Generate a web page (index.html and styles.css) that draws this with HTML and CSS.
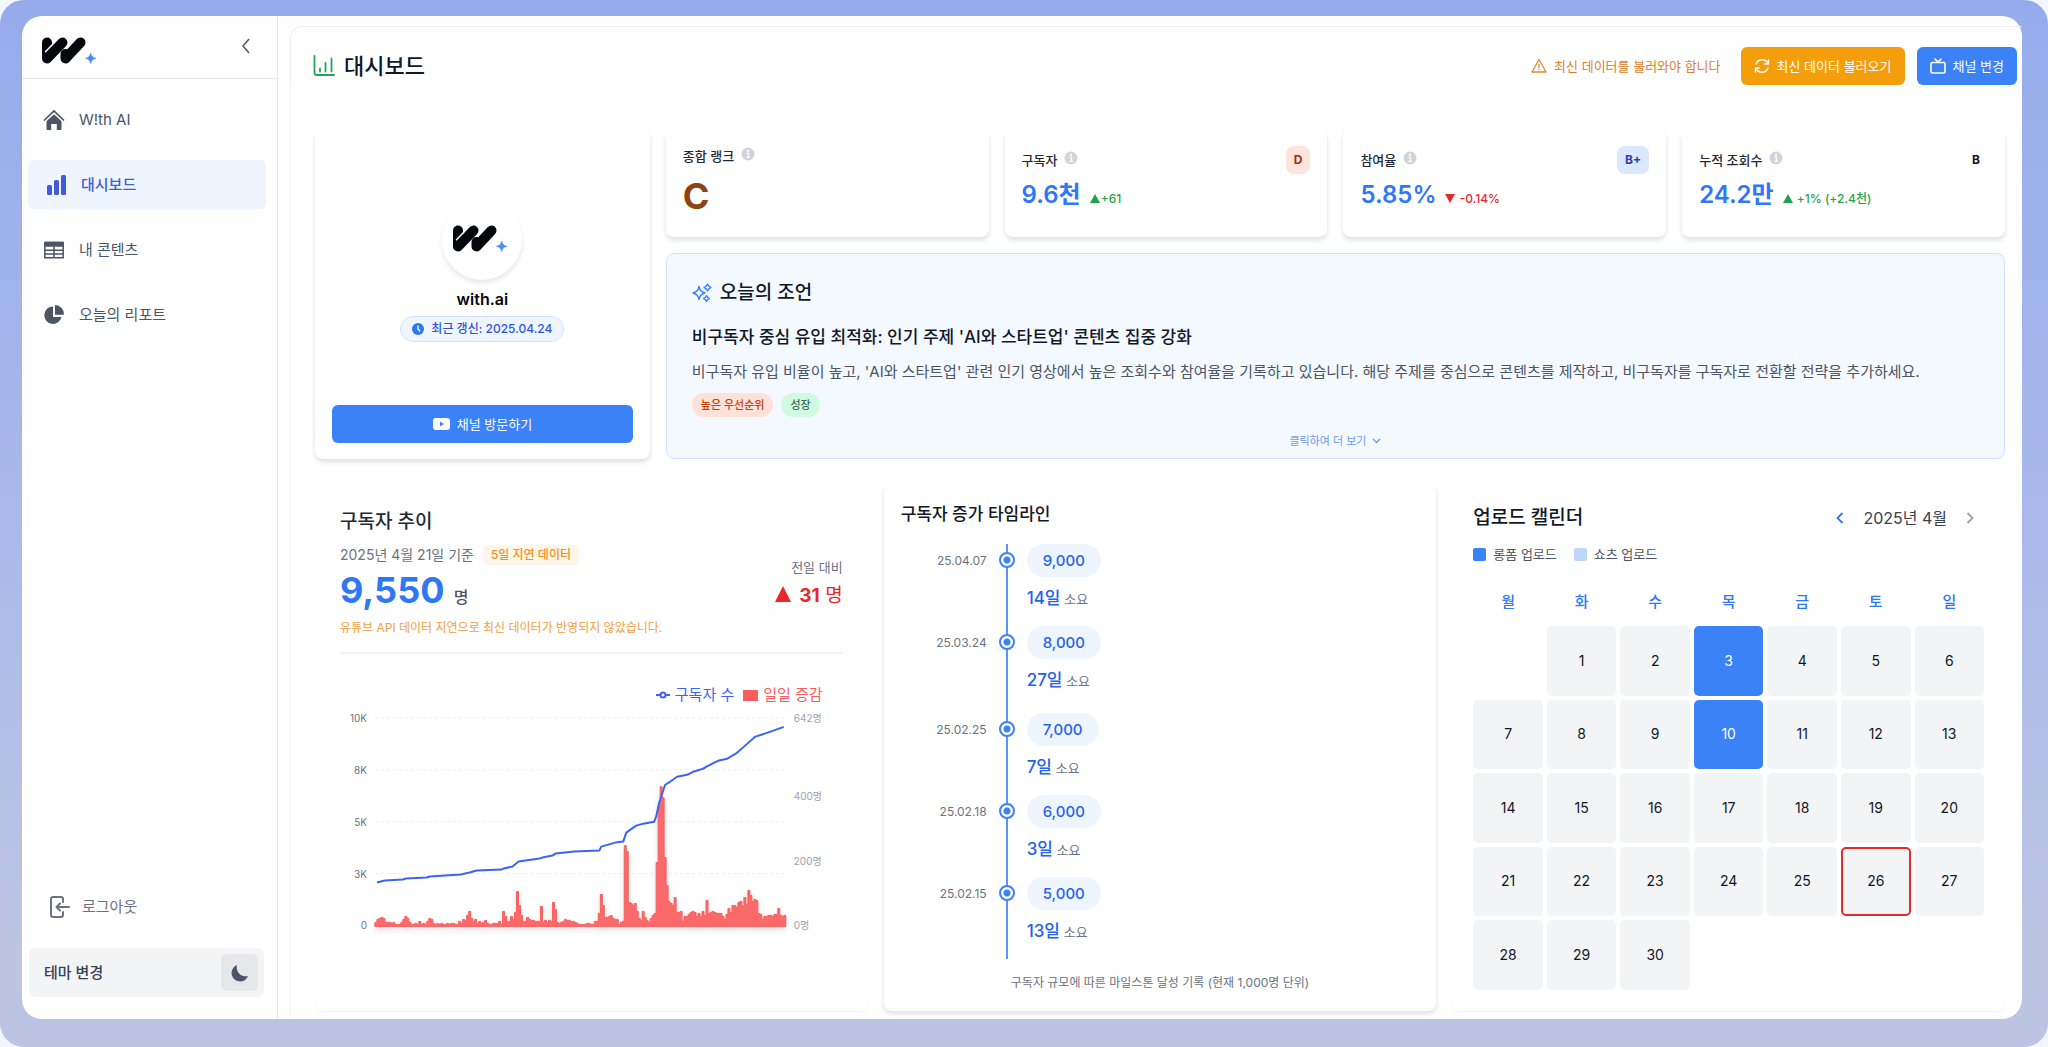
FILE: index.html
```html
<!DOCTYPE html>
<html lang="ko">
<head>
<meta charset="utf-8">
<meta name="viewport" content="width=device-width, initial-scale=1">
<title>W!th AI 대시보드</title>
<link rel="stylesheet" href="styles.css">
</head>
<body>
<svg class="defs" width="0" height="0" aria-hidden="true">
  <symbol id="logo" viewBox="0 0 54 27">
    <g fill="none" stroke="#05060c" stroke-width="10" stroke-linecap="round" stroke-linejoin="round">
      <path d="M5 5.500V21.500L20.500 5.500"/>
      <path d="M23.500 17V21.500L38.500 5.500"/>
    </g>
    <path d="M3.500 14.800L10.500 7.600" fill="none" stroke="#fff" stroke-width="1.500" stroke-linecap="round"/>
    <path d="M48.700 16c.8 3.400 1.900 4.500 5.300 5.300-3.400.8-4.500 1.900-5.300 5.300-.8-3.400-1.900-4.500-5.300-5.300 3.400-.8 4.500-1.900 5.300-5.300z" fill="#4f88fb" stroke="#4f88fb" stroke-width=".6"/>
  </symbol>
  <symbol id="info" viewBox="0 0 14 14">
    <circle cx="7" cy="7" r="6.500" fill="#d1d5db"/>
    <circle cx="7" cy="3.900" r="1.100" fill="#fff"/>
    <path d="M5.500 6.300h2v4M5.300 10.300h3.600" fill="none" stroke="#fff" stroke-width="1.300"/>
  </symbol>
</svg>

<div class="window">
  <aside class="sidebar">
    <div class="sidebar-head">
      <svg class="logo" role="img" aria-label="W!th AI"><use href="#logo"/></svg>
      <button class="icon-button" type="button" aria-label="메뉴 접기">
        <svg width="10" height="16" viewBox="0 0 10 16" fill="none" stroke="#4b5563" stroke-width="1.500"><path d="M8 1L2 8l6 7"/></svg>
      </button>
    </div>
    <nav class="nav">
      <a class="nav-item" href="#home">
        <svg width="22" height="22" viewBox="0 0 22 22" fill="none" stroke="#4b5563" stroke-width="1.700"><path d="M1 11.500L11 2l10 9.500"/><path d="M3.500 12.300L11 5.200l7.500 7.100V20a1 1 0 0 1-1 1h-3.700v-6H8.200v6H4.500a1 1 0 0 1-1-1z" fill="#4b5563" stroke="none"/></svg>
        <span>W!th AI</span>
      </a>
      <a class="nav-item nav-item--active" href="#dashboard" aria-current="page">
        <svg width="22" height="22" viewBox="0 0 22 22" fill="#3f5bdb"><rect x="2" y="11" width="5" height="10" rx="1.500"/><rect x="9" y="6" width="5" height="15" rx="1.500"/><rect x="16" y="1" width="5" height="20" rx="1.500"/></svg>
        <span>대시보드</span>
      </a>
      <a class="nav-item" href="#contents">
        <svg width="22" height="22" viewBox="0 0 22 22"><path d="M1.800 3.500h18.400v15.200H1.800zM1.800 11.200h18.400M1.800 15h18.400M11 7.500v11.200" fill="none" stroke="#4b5563" stroke-width="1.500"/><rect x="1" y="2.800" width="20" height="5" rx="1.500" fill="#4b5563"/></svg>
        <span>내 콘텐츠</span>
      </a>
      <a class="nav-item" href="#report">
        <svg width="22" height="22" viewBox="0 0 22 22" fill="#4b5563"><path d="M10 2.500V13h8.500A8.700 8.700 0 1 1 10 2.500z"/><path d="M12 1a9 9 0 0 1 9 9.800h-9z"/></svg>
        <span>오늘의 리포트</span>
      </a>
    </nav>
    <div class="sidebar-foot">
      <button class="logout" type="button">
        <svg width="20" height="22" viewBox="0 0 20 22" fill="none" stroke="#6b7280" stroke-width="2" stroke-linecap="round" stroke-linejoin="round"><path d="M13 6V3a2 2 0 0 0-2-2H3a2 2 0 0 0-2 2v16a2 2 0 0 0 2 2h8a2 2 0 0 0 2-2v-3"/><path d="M19 11H7M10 7.500L6.500 11l3.500 3.500"/></svg>
        <span>로그아웃</span>
      </button>
      <div class="theme">
        <span>테마 변경</span>
        <button class="theme-toggle" type="button" aria-label="다크 모드">
          <svg width="18" height="18" viewBox="0 0 18 18" fill="#4b5563"><path d="M6 1a8.500 8.500 0 1 0 11 11A9 9 0 0 1 6 1z"/></svg>
        </button>
      </div>
    </div>
  </aside>

  <main class="main">
    <header class="page-head">
      <svg width="22" height="22" viewBox="0 0 22 22" fill="none" stroke="#22a652" stroke-width="1.800" stroke-linecap="round"><path d="M1.500 1v17a2 2 0 0 0 2 2H21M7 16.500v-3M12.500 16.500V8M18.500 16.500v-13"/></svg>
      <h1>대시보드</h1>
      <p class="warning">
        <svg width="16" height="16" viewBox="0 0 16 16" fill="none" stroke="#e08a2e" stroke-width="1.300" stroke-linejoin="round"><path d="M8 1.500l7 12.500H1zM8 6v4M8 11v1.300"/></svg>
        최신 데이터를 불러와야 합니다
      </p>
      <button class="button button--amber" type="button">
        <svg width="16" height="16" viewBox="0 0 16 16" fill="none" stroke="#fff" stroke-width="1.400" stroke-linecap="round" stroke-linejoin="round"><path d="M14.500 2v4h-4M1.500 14v-4h4M14.200 6A6.500 6.500 0 0 0 2 6M1.800 10A6.500 6.500 0 0 0 14 10"/></svg>
        최신 데이터 불러오기
      </button>
      <button class="button" type="button">
        <svg width="16" height="16" viewBox="0 0 16 16" fill="none" stroke="#fff" stroke-width="1.600" stroke-linecap="round" stroke-linejoin="round"><rect x="1" y="4.500" width="14" height="10.500" rx="1.500"/><path d="M5 1l3 3 3-3"/></svg>
        채널 변경
      </button>
    </header>

    <div class="overview">
      <section class="card profile">
        <div class="avatar"><svg class="logo" role="img" aria-label="with.ai"><use href="#logo"/></svg></div>
        <h2 class="profile-name">with.ai</h2>
        <p class="updated">
          <svg width="12" height="12" viewBox="0 0 12 12"><circle cx="6" cy="6" r="6" fill="#2f76f0"/><path d="M6 2.500V6l2 2.500" fill="none" stroke="#fff" stroke-width="1.300"/></svg>
          최근 갱신: 2025.04.24
        </p>
        <a class="button profile-link" href="#channel">
          <svg width="17" height="12" viewBox="0 0 17 12"><rect width="17" height="12" rx="3" fill="#fff"/><path d="M7 3.500L11 6 7 8.500z" fill="#3b82f6"/></svg>
          채널 방문하기
        </a>
      </section>

      <div class="overview-side">
        <div class="stats">
          <section class="card stat stat--rank">
            <h2 class="stat-label">종합 랭크 <svg width="14" height="14"><use href="#info"/></svg></h2>
            <strong class="rank">C</strong>
          </section>
          <section class="card stat">
            <div class="stat-row"><h2 class="stat-label">구독자 <svg width="14" height="14"><use href="#info"/></svg></h2><span class="grade grade--d">D</span></div>
            <p class="stat-value"><strong>9.6천</strong><span class="delta delta--up"><i class="tri tri--up"></i>+61</span></p>
          </section>
          <section class="card stat">
            <div class="stat-row"><h2 class="stat-label">참여율 <svg width="14" height="14"><use href="#info"/></svg></h2><span class="grade grade--b">B+</span></div>
            <p class="stat-value"><strong>5.85%</strong><span class="delta delta--down"><i class="tri tri--down"></i> -0.14%</span></p>
          </section>
          <section class="card stat">
            <div class="stat-row"><h2 class="stat-label">누적 조회수 <svg width="14" height="14"><use href="#info"/></svg></h2><span class="grade">B</span></div>
            <p class="stat-value"><strong>24.2만</strong><span class="delta delta--up"><i class="tri tri--up"></i> +1% (+2.4천)</span></p>
          </section>
        </div>

        <section class="advice">
          <h2 class="advice-title">
            <svg width="20" height="20" viewBox="0 0 20 20" fill="none" stroke="#3b82f6" stroke-width="1.400" stroke-linejoin="round"><path d="M7 3.500c.9 4 2 5.300 6 6.500-4 1.200-5.100 2.500-6 6.500-.9-4-2-5.300-6-6.500 4-1.200 5.100-2.500 6-6.500z"/><path d="M15.500 1l1.300 2.200L19 4.500l-2.200 1.300L15.500 8l-1.300-2.200L12 4.500l2.200-1.300z"/><path d="M14.500 12.500l1.100 1.900 1.900 1.100-1.900 1.100-1.100 1.900-1.100-1.900-1.900-1.100 1.900-1.100z"/></svg>
            오늘의 조언
          </h2>
          <h3>비구독자 중심 유입 최적화: 인기 주제 'AI와 스타트업' 콘텐츠 집중 강화</h3>
          <p class="advice-text">비구독자 유입 비율이 높고, 'AI와 스타트업' 관련 인기 영상에서 높은 조회수와 참여율을 기록하고 있습니다. 해당 주제를 중심으로 콘텐츠를 제작하고, 비구독자를 구독자로 전환할 전략을 추가하세요.</p>
          <div class="tags"><span class="tag tag--priority">높은 우선순위</span><span class="tag tag--growth">성장</span></div>
          <button class="more" type="button">클릭하여 더 보기
            <svg width="9" height="6" viewBox="0 0 9 6" fill="none" stroke="#6c9bf5" stroke-width="1.300"><path d="M1 1l3.500 3.500L8 1"/></svg>
          </button>
        </section>
      </div>
    </div>

    <div class="details">
      <section class="card card--flat trend">
        <h2>구독자 추이</h2>
        <div class="trend-summary">
          <div>
            <p class="trend-date">2025년 4월 21일 기준 <span class="delay">5일 지연 데이터</span></p>
            <p class="trend-total"><strong>9,550</strong> 명</p>
            <p class="trend-note">유튜브 API 데이터 지연으로 최신 데이터가 반영되지 않았습니다.</p>
          </div>
          <div class="trend-change">
            <p>전일 대비</p>
            <p class="trend-diff"><i class="tri tri--big"></i><strong>31</strong> 명</p>
          </div>
        </div>
        <div class="legend">
          <span class="legend-line"><svg width="14" height="8" viewBox="0 0 14 8" fill="none" stroke="#3b64f6" stroke-width="2"><path d="M0 4h4M10 4h4"/><circle cx="7" cy="4" r="2.500"/></svg>구독자 수</span>
          <span class="legend-bar"><svg width="15" height="11"><rect width="15" height="11" fill="#f95d5d"/></svg>일일 증감</span>
        </div>
        <svg class="chart" viewBox="0 0 504 236" role="img" aria-label="구독자 수와 일일 증감">
          <path class="grid" d="M35 18H447M35 70H447M35 122H447M35 174H447M35 226H447"/>
          <g class="axis axis--left"><text x="27" y="22">10K</text><text x="27" y="74">8K</text><text x="27" y="126">5K</text><text x="27" y="178">3K</text><text x="27" y="230">0</text></g>
          <g class="axis"><text x="455" y="22">642명</text><text x="455" y="100">400명</text><text x="455" y="165">200명</text><text x="455" y="230">0명</text></g>
          <path id="bars" class="bars"/>
          <polyline class="line" points="37,183 45,181 63,180 66,179 87,178 90,177 121,175 130,173 137,171 162,170 164,169 173,167 179,162 200,159 203,158 213,156 216,154 235,152 260,151 262,147 276,143 284,142 287,133 297,126 304,124 315,122 317,117 320,103 324,91 326,85 331,82 338,77 348,75 354,72 364,69 367,67 379,61 388,59 398,53 407,45 416,37 431,32 445,27"/>
        </svg>
      </section>

      <section class="card timeline">
        <h2>구독자 증가 타임라인</h2>
        <ol class="milestones">
          <li><time>25.04.07</time><i class="dot"></i><div><span class="pill">9,000</span><p><b>14일</b> 소요</p></div></li>
          <li class="long"><time>25.03.24</time><i class="dot"></i><div><span class="pill">8,000</span><p><b>27일</b> 소요</p></div></li>
          <li><time>25.02.25</time><i class="dot"></i><div><span class="pill">7,000</span><p><b>7일</b> 소요</p></div></li>
          <li><time>25.02.18</time><i class="dot"></i><div><span class="pill">6,000</span><p><b>3일</b> 소요</p></div></li>
          <li><time>25.02.15</time><i class="dot"></i><div><span class="pill">5,000</span><p><b>13일</b> 소요</p></div></li>
        </ol>
        <p class="timeline-note">구독자 규모에 따른 마일스톤 달성 기록 (현재 1,000명 단위)</p>
      </section>

      <section class="card card--flat calendar">
        <div class="calendar-head">
          <h2>업로드 캘린더</h2>
          <button class="icon-button" type="button" aria-label="이전 달"><svg width="8" height="12" viewBox="0 0 8 12" fill="none" stroke="#2f76f6" stroke-width="1.800"><path d="M6.500 1l-5 5 5 5"/></svg></button>
          <span>2025년 4월</span>
          <button class="icon-button" type="button" aria-label="다음 달"><svg width="8" height="12" viewBox="0 0 8 12" fill="none" stroke="#9ca3af" stroke-width="1.800"><path d="M1.500 1l5 5-5 5"/></svg></button>
        </div>
        <div class="upload-legend"><span><i class="swatch"></i>롱폼 업로드</span><span><i class="swatch swatch--light"></i>쇼츠 업로드</span></div>
        <table class="month">
          <thead><tr><th>월</th><th>화</th><th>수</th><th>목</th><th>금</th><th>토</th><th>일</th></tr></thead>
          <tbody>
            <tr><td class="empty"></td><td>1</td><td>2</td><td class="upload">3</td><td>4</td><td>5</td><td>6</td></tr>
            <tr><td>7</td><td>8</td><td>9</td><td class="upload">10</td><td>11</td><td>12</td><td>13</td></tr>
            <tr><td>14</td><td>15</td><td>16</td><td>17</td><td>18</td><td>19</td><td>20</td></tr>
            <tr><td>21</td><td>22</td><td>23</td><td>24</td><td>25</td><td class="today">26</td><td>27</td></tr>
            <tr><td>28</td><td>29</td><td>30</td></tr>
          </tbody>
        </table>
      </section>
    </div>
  </main>
</div>
<script src="chart.js"></script>
</body>
</html>
```
FILE: chart.js
```js
// Daily subscriber change, one bar per day, in chart units.
const daily = [
  3,6,7,8,7,3,3,3,2,3, 1,1,1,3,6,9,7,3,1,1, 2,1,4,1,2,1,4,7,6,2, 1,2,1,2,1,1,2,1,2,2,
  1,1,4,2,6,5,10,14,7,4, 6,2,4,2,3,5,2,1,1,2, 2,2,4,1,14,9,4,4,9,6, 13,34,20,10,4,4,8,6,5,5,
  4,4,4,19,3,5,3,5,4,23, 16,3,2,3,4,6,5,5,4,4, 3,2,1,1,1,1,2,2,1,1, 4,4,12,31,20,8,8,9,10,7,
  6,6,1,3,4,80,74,23,22,20, 22,14,7,5,14,8,5,3,7,10, 12,63,120,139,128,68,40,24,22,20,
  28,13,13,14,4,9,9,11,13,14, 13,9,12,9,14,10,25,12,13,14, 13,12,12,12,9,6,11,17,13,20,
  20,18,23,24,19,28,21,35,30,24, 26,25,12,11,6,9,9,10,10,9, 11,11,17,10,9,10
];
const steps = daily.map((height, day) => `V${226 - height}H${37 + day * 2}`).join("");
document.getElementById("bars").setAttribute("d", `M35 227${steps}V227Z`);
```
FILE: styles.css
```css
* { box-sizing: border-box; }

body {
  margin: 0;
  background: #f3f5fc;
  color: #111827;
  font-family: Inter, "Noto Sans CJK KR", sans-serif;
  font-size: 15px;
  line-height: 24px;
}

h1, h2, h3, p, ol { margin: 0; padding: 0; font-weight: 400; }
h1, h2, h3 { font-weight: 500; }
button { border: 0; background: none; padding: 0; font: inherit; color: inherit; cursor: pointer; }
a { color: inherit; text-decoration: none; }
svg { flex: none; display: block; }
.defs { position: absolute; }

.window {
  display: flex;
  min-height: 100vh;
  padding: 16px 26px 28px 22px;
  border-radius: 24px;
  background: linear-gradient(#96abec, #a9b9ea 50%, #bcc4e3 90%);
}

/* Sidebar */
.sidebar {
  display: flex;
  flex-direction: column;
  flex: none;
  width: 256px;
  border-right: 1px solid #e5e7eb;
  border-radius: 20px 0 0 20px;
  background: #fff;
}
.sidebar-head {
  display: flex;
  align-items: flex-start;
  justify-content: space-between;
  height: 63px;
  padding: 21px 25px 0 20px;
  border-bottom: 1px solid #e5e7eb;
}
.logo { width: 54px; height: 27px; }
.icon-button { display: flex; padding: 1px; }
.nav { display: flex; flex-direction: column; gap: 16px; padding: 16px 11px 0 6px; }
.nav-item {
  display: flex;
  align-items: center;
  gap: 14px;
  height: 49px;
  padding: 0 15px;
  border-radius: 6px;
  color: #4b5563;
}
.nav-item--active { padding-left: 17px; background: #eff5ff; color: #3f5bdb; font-weight: 500; }
.sidebar-foot { margin-top: auto; padding: 0 13px 22px 7px; }
.logout { display: flex; align-items: center; gap: 12px; padding: 0 21px; color: #6b7280; }
.theme {
  display: flex;
  align-items: center;
  justify-content: space-between;
  height: 49px;
  margin-top: 29px;
  padding: 0 6px 0 15px;
  border-radius: 6px;
  background: #f3f4f6;
  color: #374151;
  font-weight: 500;
}
.theme-toggle { display: grid; place-items: center; width: 37px; height: 37px; border-radius: 6px; background: #e5e7eb; }

/* Main area */
.main {
  flex: 1;
  min-width: 0;
  padding-left: 12px;
  border-radius: 0 20px 20px 0;
  background: linear-gradient(#f3f4f6, #f3f4f6) 12px 30px / 1px 100% no-repeat, #fff;
}
.page-head {
  display: flex;
  align-items: center;
  margin-top: 10px;
  padding: 20px 5px 0 22px;
  border-top: 1px solid #eceef1;
  border-left: 1px solid #eceef1;
  border-top-left-radius: 12px;
}
.page-head h1 { margin: 0 auto 0 9px; font-size: 22px; line-height: 32px; }
.warning { display: flex; align-items: center; gap: 7px; margin-right: 20px; color: #d9822b; font-size: 13px; }
.button {
  display: flex;
  align-items: center;
  justify-content: center;
  gap: 7px;
  height: 38px;
  padding: 0 13px;
  border-radius: 6px;
  background: #3b82f6;
  color: #fff;
  font-size: 13px;
}
.button--amber { margin-right: 12px; background: #f59e0b; }

.card {
  border-radius: 8px;
  background: #fff;
  box-shadow: 0 3px 5px rgba(0, 0, 0, .13);
  clip-path: inset(0 -8px -10px -8px);
}
.card--flat { box-shadow: 0 1px 2px rgba(0, 0, 0, .06); }

.overview { display: grid; grid-template-columns: 1fr 4fr; gap: 16px; padding: 45px 17px 0 25px; }
.overview-side { display: grid; gap: 16px; min-width: 0; }

.profile { display: flex; flex-direction: column; align-items: center; padding: 70px 17px 16px; }
.avatar {
  display: grid;
  place-items: center;
  width: 80px;
  height: 80px;
  padding: 0 4px 4px 0;
  border-radius: 50%;
  box-shadow: 0 3px 5px rgba(0, 0, 0, .1);
}
.profile-name { margin-top: 7px; font-size: 16px; font-weight: 600; color: #05060c; }
.updated {
  display: flex;
  align-items: center;
  gap: 7px;
  margin-top: 5px;
  padding: 0 11px;
  border: 1px solid #d3e3fd;
  border-radius: 13px;
  background: #eff5ff;
  color: #2f55d9;
  font-size: 12px;
  font-weight: 500;
}
.profile-link { align-self: stretch; margin-top: auto; }

.stats { display: grid; grid-template-columns: repeat(4, 1fr); gap: 16px; }
.stat { height: 107px; padding: 16px 17px 0; }
.stat-row { display: flex; justify-content: space-between; align-items: flex-start; }
.stat-label { display: flex; gap: 7px; padding-top: 2px; color: #1f2937; font-size: 13px; }
.stat-label svg { margin-top: 3px; }
.stat--rank { padding-top: 12px; }
.rank { display: block; color: #8b4513; font-size: 36px; line-height: 44px; margin-top: 6px; }
.grade { display: grid; place-items: center; height: 28px; padding: 0 8px; border-radius: 8px; font-size: 12px; font-weight: 700; color: #111827; }
.grade--d { background: #fee4da; color: #9a3412; }
.grade--b { background: #dbe7fe; color: #3040b0; }
.stat-value { display: flex; align-items: baseline; gap: 9px; margin-top: 5px; line-height: 32px; }
.stat-value strong { color: #3077f6; font-size: 24px; font-weight: 600; }
.delta { font-size: 12px; font-weight: 500; white-space: pre; }
.delta--up { color: #1fa34a; }
.delta--down { color: #e8282b; }
.tri { display: inline-block; border: 5px solid transparent; border-top-width: 0; border-bottom: 9px solid currentColor; margin-right: 1px; }
.tri--down { border-bottom-width: 0; border-top: 9px solid currentColor; }
.tri--big { border-width: 0 8px 16px; }

.advice {
  display: flex;
  flex-direction: column;
  align-items: flex-start;
  height: 206px;
  padding: 27px 25px 0;
  border: 1px solid #cfe0fd;
  border-radius: 8px;
  background: #f4f8ff;
}
.advice-title { display: flex; align-items: center; gap: 8px; font-size: 19px; }
.advice h3 { margin-top: 20px; font-size: 17px; }
.advice-text { margin-top: 11px; color: #4b5563; }
.tags { display: flex; gap: 8px; margin-top: 9px; }
.tag { padding: 0 9px; border-radius: 12px; font-size: 11px; font-weight: 500; }
.tag--priority { background: #fee2d9; color: #c2410c; }
.tag--growth { background: #d1fae0; color: #3f6b55; }
.more { display: flex; align-items: center; gap: 6px; align-self: center; margin-top: 12px; color: #6c9bf5; font-size: 11px; }

/* Lower cards */
.details { display: grid; grid-template-columns: repeat(3, 1fr); gap: 16px; padding: 24px 17px 8px 25px; }
.details .card { min-height: 528px; }

.trend { padding: 27px 25px 0; }
.trend h2 { font-size: 19px; color: #1f2937; }
.trend-summary { display: flex; justify-content: space-between; padding-bottom: 12px; border-bottom: 2px solid #f1f2f4; }
.trend-date { display: flex; align-items: center; gap: 9px; margin-top: 9px; color: #6b7280; font-size: 14px; }
.delay { padding: 0 8px; border-radius: 4px; background: #fff6e9; color: #f0901e; font-size: 12px; font-weight: 500; line-height: 20px; }
.trend-total { color: #4b5563; font-size: 16px; font-weight: 500; line-height: 46px; }
.trend-total strong { margin-right: 5px; color: #3077f6; font-size: 36px; }
.trend-note { margin-top: -4px; color: #f0a03c; font-size: 12px; }
.trend-change { padding-top: 21px; color: #6b7280; font-size: 13px; text-align: right; }
.trend-diff { color: #e8282b; font-size: 19px; line-height: 34px; }
.trend-diff .tri { margin-right: 8px; }
.legend { display: flex; justify-content: flex-end; gap: 9px; margin-top: 29px; padding-right: 20px; }
.legend span { display: flex; align-items: center; gap: 5px; }
.legend-line { color: #3b64f6; }
.legend-bar { color: #f95d5d; }
.chart { width: 100%; margin-top: -7px; }
.grid { stroke: #eceef1; stroke-dasharray: 3 3; }
.axis { fill: #9ca3af; font-size: 10px; }
.axis--left { fill: #6b7280; text-anchor: end; }
.bars { fill: #fa6a6a; stroke: #f95d5d; filter: drop-shadow(0 3px 3px rgba(0, 0, 0, .12)); }
.line { fill: none; stroke: #3b64f6; stroke-width: 2; stroke-linejoin: round; }

.timeline { padding: 19px 17px 0; }
.timeline h2 { font-size: 17px; }
.milestones {
  list-style: none;
  margin-top: 18px;
  min-height: 415px;
  background: linear-gradient(#5b95f8, #5b95f8) 105px 0 / 2px 100% no-repeat;
}
.milestones li { display: grid; grid-template-columns: 86px 16px 1fr; column-gap: 12px; height: 82px; }
.milestones .long { height: 87px; }
.milestones time { color: #6b7280; font-size: 12px; line-height: 33px; text-align: right; }
.dot { width: 16px; height: 16px; margin-top: 8px; border: 2px solid #3b82f6; border-radius: 50%; background: radial-gradient(#3b82f6 3px, #fff 4px); }
.pill { display: inline-block; padding: 0 16px; border-radius: 17px; background: #eff5ff; color: #2563eb; line-height: 33px; font-weight: 500; }
.milestones p { margin-top: 7px; color: #6b7280; font-size: 13px; line-height: 28px; }
.milestones b { color: #2563eb; font-size: 17px; font-weight: 500; }
.timeline-note { margin-top: 12px; color: #6b7280; font-size: 12px; text-align: center; }

.calendar { padding: 23px 21px 0; }
.calendar-head { display: flex; align-items: center; padding-right: 9px; color: #374151; font-size: 16px; }
.calendar-head h2 { margin-right: auto; color: #111827; font-size: 19px; }
.calendar-head span { margin: 0 18px; }
.upload-legend { display: flex; gap: 17px; margin-top: 12px; color: #4b5563; font-size: 13px; }
.upload-legend span { display: flex; align-items: center; gap: 7px; }
.swatch { width: 13px; height: 13px; border-radius: 2px; background: #3b82f6; }
.swatch--light { background: #bfd5fd; }
.month { display: grid; grid-template-columns: repeat(7, 1fr); gap: 4px; margin-top: 16px; }
.month thead, .month tbody, .month tr { display: contents; }
.month th { height: 40px; padding: 0; color: #3077f6; font-weight: 500; line-height: 40px; }
.month td { display: grid; place-items: center; aspect-ratio: 1; padding: 0; border-radius: 5px; background: #f3f4f6; font-size: 14px; }
.month .empty { background: none; }
.month .upload { background: #3b82f6; color: #fff; }
.month .today { border: 2px solid #e8282b; }
```
